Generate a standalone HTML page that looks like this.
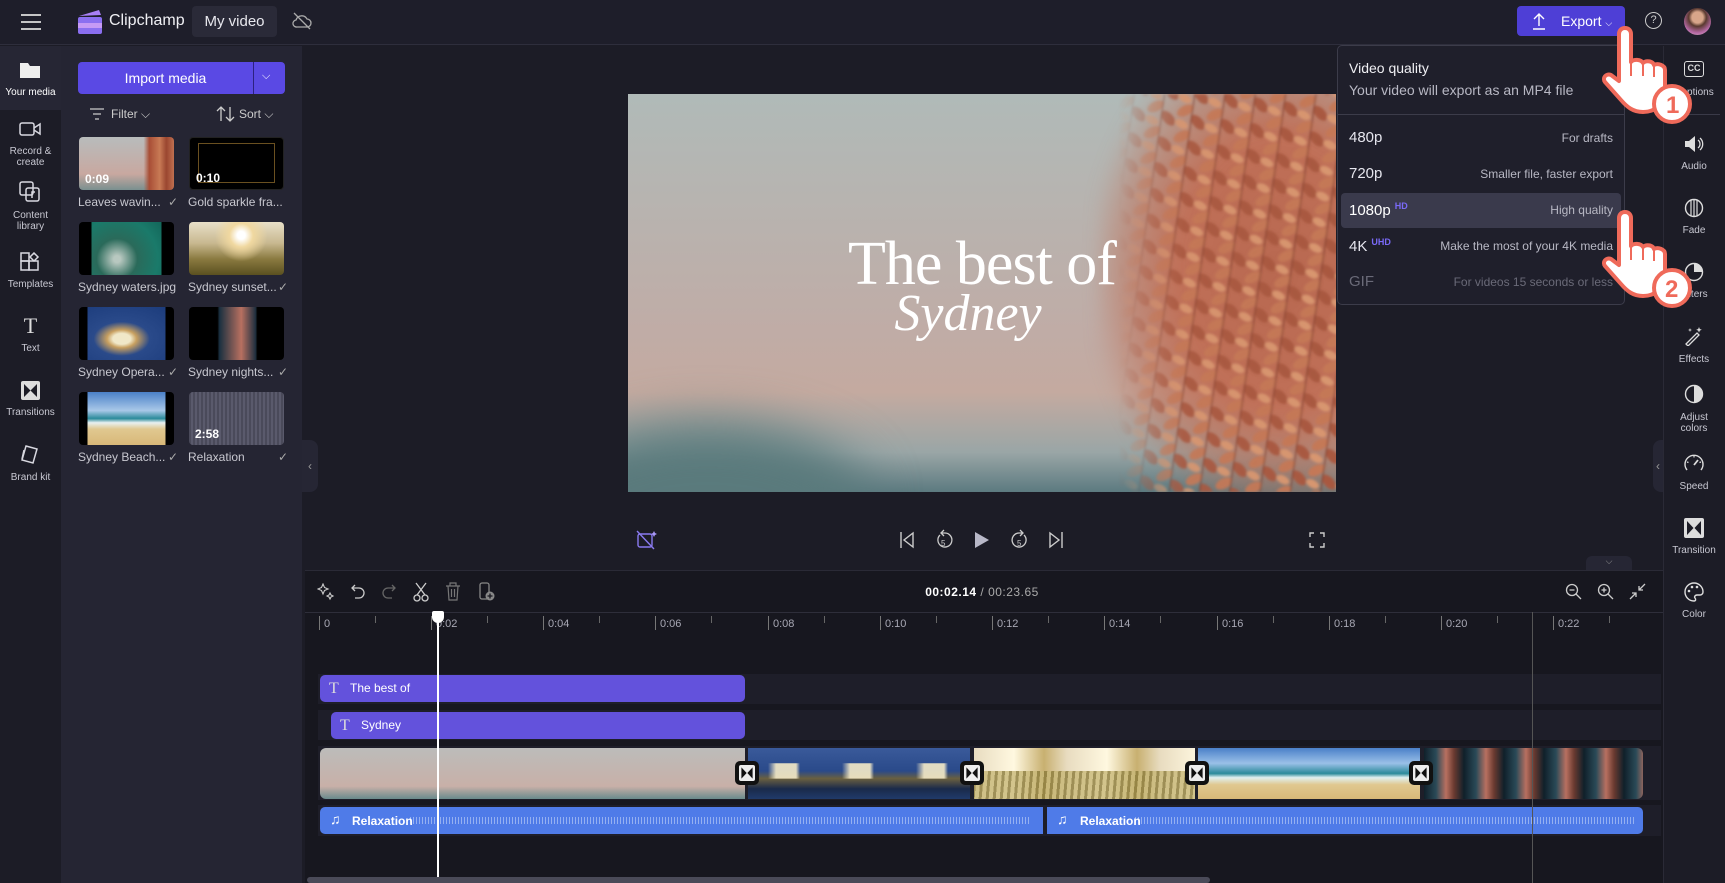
<!DOCTYPE html>
<html><head><meta charset="utf-8"><style>
*{margin:0;padding:0;box-sizing:border-box}
body{width:1725px;height:883px;overflow:hidden;background:#1c1c26;font-family:"Liberation Sans",sans-serif;color:#e8e8ee;position:relative}
.a{position:absolute}
.nav{font-size:10px;color:#c8c8d2;text-align:center;width:61px;left:0;line-height:11px}
.ic{stroke:#d8d8e0;fill:none;stroke-width:1.5}
.th{position:absolute;width:95px;height:53px;border-radius:4px;overflow:hidden}
.tl{position:absolute;font-size:12px;color:#c8c8d0;width:100px}
.tl span{position:absolute;right:0;color:#aaa}
.dur{position:absolute;left:6px;bottom:4px;font-size:12px;font-weight:bold;color:#fff}
.rl{position:absolute;font-size:11px;color:#a8a8b4;top:618px}
.tk{position:absolute;width:1px;background:#777;top:616px;height:14px}
.tks{position:absolute;width:1px;background:#666;top:616px;height:7px}
.rs{font-size:10px;color:#c8c8d2;text-align:center;width:62px;left:1663px;line-height:11px}
.q{position:absolute;left:1349px;font-size:15px;color:#e6e6ee}
.qd{position:absolute;right:112px;font-size:12px;color:#b8b8c4}
.tr{position:absolute;width:24px;height:24px;background:#111;border-radius:5px;top:761px}
.tr:before{content:"";position:absolute;left:4px;top:4px;width:16px;height:16px;background:#eee;border-radius:2px}
.tr:after{content:"";position:absolute;left:4px;top:4px;width:16px;height:16px;background:#111;clip-path:polygon(15% 15%,48% 50%,15% 85%,15% 15%,85% 15%,52% 50%,85% 85%,85% 15%)}
.tT{position:absolute;font-family:'Liberation Serif',serif;font-size:16px;color:#ddd;line-height:27px}
</style></head><body>

<!-- top bar -->
<div class="a" style="left:0;top:0;width:1725px;height:45px;background:#1e1e2a;border-bottom:1px solid #2e2e3c"></div>
<svg class="a" style="left:20px;top:13px" width="22" height="18"><path d="M1 2h20M1 9h20M1 16h20" stroke="#ddd" stroke-width="1.8"/></svg>
<svg class="a" style="left:77px;top:9px" width="26" height="26"><rect x="1" y="8" width="24" height="17" rx="2" fill="#8b6ff0"/><rect x="1" y="14" width="24" height="5" fill="#c69af5"/><path d="M2 7L22 1l2 5z" fill="#a880f5"/></svg>
<div class="a" style="left:109px;top:12px;font-size:16px;color:#f0f0f4">Clipchamp</div>
<div class="a" style="left:192px;top:6px;width:85px;height:31px;background:#2a2a38;border-radius:4px;font-size:15px;line-height:31px;text-align:center;color:#e8e8ee">My video</div>
<svg class="a" style="left:292px;top:12px" width="20" height="18"><path d="M5 15h10a4 4 0 0 0 0-8 6 6 0 0 0-11 1 3.5 3.5 0 0 0 1 7zM2 1l16 16" stroke="#aaa" fill="none" stroke-width="1.3"/></svg>
<div class="a" style="left:1517px;top:6px;width:108px;height:30px;background:#4e3fd6;border-radius:4px;font-size:14px;line-height:30px;color:#fff;padding-left:44px">Export <span style="font-size:9px">⌵</span></div>
<svg class="a" style="left:1531px;top:12px" width="16" height="18"><path d="M8 14V2M3 7l5-5 5 5M2 17h12" stroke="#fff" fill="none" stroke-width="1.4"/></svg>
<div class="a" style="left:1645px;top:12px;width:17px;height:17px;border:1.4px solid #ccc;border-radius:50%;font-size:11px;text-align:center;line-height:15px;color:#ccc">?</div>
<div class="a" style="left:1684px;top:8px;width:27px;height:27px;border-radius:50%;background:radial-gradient(circle at 50% 35%,#d8a58a 25%,#5a3a30 40%,#b86aa8 70%,#cfc0b8)"></div>

<!-- left nav -->
<div class="a" style="left:0;top:46px;width:61px;height:837px;background:#1c1c26"></div>
<div class="a" style="left:0;top:46px;width:61px;height:64px;background:#262634"></div>
<svg class="a" style="left:19px;top:60px" width="22" height="19"><path d="M1 3h8l2 3h10v12H1z" fill="#eee"/></svg>
<div class="a nav" style="top:87px;color:#fff">Your media</div>
<svg class="a" style="left:19px;top:121px" width="22" height="16"><rect x="1" y="2" width="14" height="12" rx="2" class="ic"/><path d="M15 7l6-4v10l-6-4" class="ic"/></svg>
<div class="a nav" style="top:146px">Record &amp;<br>create</div>
<svg class="a" style="left:19px;top:181px" width="22" height="22"><rect x="1" y="1" width="13" height="13" rx="2" class="ic"/><rect x="7" y="7" width="13" height="13" rx="2" fill="#1c1c26" class="ic"/><path d="M13 17v-6h3" class="ic"/></svg>
<div class="a nav" style="top:210px">Content<br>library</div>
<svg class="a" style="left:20px;top:252px" width="20" height="20"><rect x="1" y="9" width="8" height="9" class="ic"/><rect x="9" y="9" width="9" height="9" class="ic"/><rect x="1" y="1" width="8" height="8" class="ic"/><path d="M14 1l4 4-4 4-4-4z" class="ic"/></svg>
<div class="a nav" style="top:279px">Templates</div>
<div class="a" style="left:18px;top:313px;font-size:22px;color:#ddd;font-family:'Liberation Serif',serif;width:25px;text-align:center">T</div>
<div class="a nav" style="top:343px">Text</div>
<svg class="a" style="left:21px;top:381px" width="19" height="19"><rect x="0" y="0" width="19" height="19" rx="2" fill="#ddd"/><path d="M3 3l6.5 6.5L3 16zM16 3l-6.5 6.5L16 16z" fill="#1c1c26"/></svg>
<div class="a nav" style="top:407px">Transitions</div>
<svg class="a" style="left:20px;top:444px" width="20" height="20"><path d="M6 2l11 3-4 14-11-3z" class="ic"/><path d="M4 6l-2 9" class="ic"/></svg>
<div class="a nav" style="top:472px">Brand kit</div>

<!-- media panel -->
<div class="a" style="left:61px;top:46px;width:241px;height:837px;background:#252533"></div>
<div class="a" style="left:78px;top:62px;width:207px;height:32px;background:#5a49e4;border-radius:4px"></div>
<div class="a" style="left:78px;top:62px;width:175px;height:32px;font-size:14px;line-height:32px;text-align:center;color:#fff">Import media</div>
<div class="a" style="left:253px;top:62px;width:1px;height:32px;background:#2c2180"></div>
<div class="a" style="left:262px;top:70px;font-size:11px;color:#fff">⌵</div>
<svg class="a" style="left:89px;top:107px" width="16" height="13"><path d="M1 2h14M4 7h8M6 12h4" stroke="#ccc" stroke-width="1.3"/></svg>
<div class="a" style="left:111px;top:107px;font-size:12px;color:#ccc">Filter ⌵</div>
<svg class="a" style="left:216px;top:105px" width="20" height="18"><path d="M5 16V2M1 6l4-4 4 4M14 2v14M10 12l4 4 4-4" stroke="#ccc" fill="none" stroke-width="1.3"/></svg>
<div class="a" style="left:239px;top:107px;font-size:12px;color:#ccc">Sort ⌵</div>

<div class="th" style="left:79px;top:137px;background:linear-gradient(90deg,transparent 68%,#a84e36 74%,#c87a55 85%,#9a4630 92%,#c07050),linear-gradient(#b8bcbc,#c8a8a0 70%,#7a9090)"><div class="dur">0:09</div></div>
<div class="tl" style="left:78px;top:195px">Leaves wavin... <span>✓</span></div>
<div class="th" style="left:189px;top:137px;background:#000;border:1px solid #222"><div style="position:absolute;left:8px;top:5px;right:8px;bottom:6px;border:1px solid #6a5020"></div><div class="dur">0:10</div></div>
<div class="tl" style="left:188px;top:195px">Gold sparkle fra...</div>

<div class="th" style="left:79px;top:222px;background:linear-gradient(90deg,#000 13%,transparent 13%,transparent 87%,#000 87%),radial-gradient(circle at 40% 70%,#b8c8c0 5%,#2a6a5a 30%,#1a7a6a 60%,#0e5a50)"></div>
<div class="tl" style="left:78px;top:280px">Sydney waters.jpg</div>
<div class="th" style="left:189px;top:222px;background:radial-gradient(circle at 55% 25%,#fff 6%,#f0d8a0 18%,transparent 40%),linear-gradient(#e8e0c8,#c8b890 40%,#8a7a40 70%,#5a5020)"></div>
<div class="tl" style="left:188px;top:280px">Sydney sunset... <span>✓</span></div>

<div class="th" style="left:79px;top:307px;background:linear-gradient(90deg,#000 9%,transparent 9%,transparent 91%,#000 91%),radial-gradient(ellipse at 45% 60%,#f0e8c8 12%,#c8a060 20%,#2a4a8a 38%,#1a3a7a)"></div>
<div class="tl" style="left:78px;top:365px">Sydney Opera... <span>✓</span></div>
<div class="th" style="left:189px;top:307px;background:linear-gradient(90deg,#000 30%,#1a3040 32%,#b87060 55%,#203040 70%,#000 72%)"></div>
<div class="tl" style="left:188px;top:365px">Sydney nights... <span>✓</span></div>

<div class="th" style="left:79px;top:392px;background:linear-gradient(90deg,#000 9%,transparent 9%,transparent 91%,#000 91%),linear-gradient(#4a80c8,#a8c8e8 35%,#2a8a9a 50%,#e8f0f0 58%,#e0c890 70%,#d8b878)"></div>
<div class="tl" style="left:78px;top:450px">Sydney Beach... <span>✓</span></div>
<div class="th" style="left:189px;top:392px;background:repeating-linear-gradient(90deg,#4a4a5a 0 2px,#5a5a6c 2px 4px)"><div class="dur">2:58</div></div>
<div class="tl" style="left:188px;top:450px">Relaxation <span>✓</span></div>

<div class="a" style="left:302px;top:440px;width:16px;height:52px;background:#262634;border-radius:0 8px 8px 0;font-size:12px;color:#999;line-height:52px;text-align:center">‹</div>

<!-- preview -->
<div class="a" style="left:628px;top:94px;width:708px;height:398px;overflow:hidden;background:linear-gradient(#b0bab8,#c0aca6 60%,#c4aaa0 75%,#9aa6a6 90%,#5c7a80)">
  <div class="a" style="left:-80px;top:330px;width:320px;height:160px;border-radius:50%;background:#5a7a7c;filter:blur(25px)"></div>
  <div class="a" style="left:470px;top:-20px;width:280px;height:440px;background:radial-gradient(ellipse at 65% 45%,#b86850 0,#c07058 40%,rgba(190,110,85,.5) 60%,transparent 75%);filter:blur(8px)"></div>
  <svg class="a" style="left:490px;top:0" width="220" height="398">
    <defs>
      <pattern id="lv" width="30" height="26" patternUnits="userSpaceOnUse" patternTransform="rotate(8)">
        <ellipse cx="9" cy="7" rx="9" ry="5" transform="rotate(-35 9 7)" fill="#c47856"/>
        <ellipse cx="23" cy="17" rx="9" ry="5" transform="rotate(40 23 17)" fill="#a85840"/>
        <ellipse cx="7" cy="21" rx="7" ry="4" transform="rotate(20 7 21)" fill="#d89670"/>
        <path d="M16 0v26" stroke="#7a3a2a" stroke-width="1"/>
      </pattern>
      <linearGradient id="fm" x1="0" x2="1"><stop offset="0" stop-color="#fff" stop-opacity="0"/><stop offset=".3" stop-color="#fff" stop-opacity=".9"/><stop offset="1" stop-color="#fff"/></linearGradient>
      <mask id="mk"><rect width="220" height="398" fill="url(#fm)"/></mask>
      <filter id="bl"><feGaussianBlur stdDeviation="1.2"/></filter>
    </defs>
    <rect width="220" height="398" fill="url(#lv)" mask="url(#mk)" filter="url(#bl)"/>
  </svg>
  <div class="a" style="left:0;top:135px;width:708px;text-align:center;font-family:'Liberation Serif',serif;font-size:62px;color:#fff;letter-spacing:-1px">The best of</div>
  <div class="a" style="left:-14px;top:190px;width:708px;text-align:center;font-family:'Liberation Serif',serif;font-style:italic;font-size:52px;color:#fff">Sydney</div>
</div>

<!-- player controls -->
<svg class="a" style="left:636px;top:530px" width="22" height="20"><rect x="2" y="4" width="14" height="13" rx="2" stroke="#8a7af0" fill="none" stroke-width="1.4"/><path d="M1 1l17 18" stroke="#8a7af0" stroke-width="1.4"/><path d="M18 1l1 2 2 1-2 1-1 2-1-2-2-1 2-1z" fill="#a898f8"/></svg>
<svg class="a" style="left:899px;top:531px" width="16" height="18"><path d="M2 1v16M14 2L5 9l9 7z" stroke="#ccc" fill="none" stroke-width="1.4"/></svg>
<svg class="a" style="left:934px;top:529px" width="20" height="22"><path d="M6 6a7 7 0 1 0 5-2H8M10 1L7 4l3 3" stroke="#ccc" fill="none" stroke-width="1.3"/><text x="7" y="17" font-size="8" fill="#ccc" font-family="Liberation Sans">5</text></svg>
<svg class="a" style="left:972px;top:529px" width="20" height="22"><path d="M3 3l14 8-14 8z" fill="#b8b8c8"/></svg>
<svg class="a" style="left:1010px;top:529px" width="20" height="22"><path d="M14 6a7 7 0 1 1-5-2h3M10 1l3 3-3 3" stroke="#ccc" fill="none" stroke-width="1.3"/><text x="7" y="17" font-size="8" fill="#ccc" font-family="Liberation Sans">5</text></svg>
<svg class="a" style="left:1048px;top:531px" width="16" height="18"><path d="M14 1v16M2 2l9 7-9 7z" stroke="#ccc" fill="none" stroke-width="1.4"/></svg>
<svg class="a" style="left:1309px;top:532px" width="16" height="16"><path d="M1 5V1h4M11 1h4v4M15 11v4h-4M5 15H1v-4" stroke="#ccc" fill="none" stroke-width="1.4"/></svg>
<div class="a" style="left:1586px;top:556px;width:46px;height:14px;background:#262634;border-radius:6px 6px 0 0;font-size:9px;color:#999;text-align:center">⌵</div>

<!-- timeline -->
<div class="a" style="left:305px;top:570px;width:1358px;height:313px;background:#17171f;border-top:1px solid #2a2a36"></div>
<div class="a" style="left:305px;top:612px;width:1358px;height:1px;background:#2e2e3a"></div>
<svg class="a" style="left:317px;top:583px" width="18" height="18"><path d="M6 1l1.5 3.5L11 6 7.5 7.5 6 11 4.5 7.5 1 6l3.5-1.5zM13 10l1 2 2 1-2 1-1 2-1-2-2-1 2-1z" stroke="#ccc" fill="none" stroke-width="1.1"/></svg>
<svg class="a" style="left:350px;top:583px" width="16" height="18"><path d="M5 2L2 5l3 3M2 5h7a5 5 0 0 1 0 10H5" stroke="#ccc" fill="none" stroke-width="1.3"/></svg>
<svg class="a" style="left:381px;top:583px" width="16" height="18"><path d="M11 2l3 3-3 3M14 5H7a5 5 0 0 0 0 10h4" stroke="#666" fill="none" stroke-width="1.3"/></svg>
<svg class="a" style="left:413px;top:582px" width="16" height="20"><path d="M3 1l9 12M13 1L4 13" stroke="#ccc" stroke-width="1.3"/><circle cx="4" cy="16" r="3" stroke="#ccc" fill="none" stroke-width="1.3"/><circle cx="12" cy="16" r="3" stroke="#ccc" fill="none" stroke-width="1.3"/></svg>
<svg class="a" style="left:445px;top:582px" width="16" height="19"><path d="M1 4h14M5 4V1h6v3M3 4l1 14h8l1-14M6.5 7v8M9.5 7v8" stroke="#777" fill="none" stroke-width="1.2"/></svg>
<svg class="a" style="left:478px;top:582px" width="18" height="20"><rect x="2" y="1" width="9" height="16" rx="2" stroke="#888" fill="none" stroke-width="1.3"/><circle cx="12" cy="14" r="4.5" fill="#888"/><path d="M12 11.5v5M9.5 14h5" stroke="#17171f" stroke-width="1.3"/></svg>
<div class="a" style="left:882px;top:585px;width:200px;text-align:center;font-size:12px;color:#fff;font-weight:bold;letter-spacing:.5px">00:02.14 <span style="color:#aaa;font-weight:normal">/ 00:23.65</span></div>
<svg class="a" style="left:1565px;top:583px" width="18" height="18"><circle cx="7" cy="7" r="5.5" stroke="#ccc" fill="none" stroke-width="1.3"/><path d="M11 11l5 5M4.5 7h5" stroke="#ccc" stroke-width="1.3"/></svg>
<svg class="a" style="left:1597px;top:583px" width="18" height="18"><circle cx="7" cy="7" r="5.5" stroke="#ccc" fill="none" stroke-width="1.3"/><path d="M11 11l5 5M4.5 7h5M7 4.5v5" stroke="#ccc" stroke-width="1.3"/></svg>
<svg class="a" style="left:1629px;top:583px" width="18" height="18"><path d="M16 1l-6 6M10 3v4h4M1 16l6-6M3 10h4v4" stroke="#ccc" fill="none" stroke-width="1.3"/></svg>

<!-- ruler -->
<div class="tk" style="left:319px"></div><div class="rl" style="left:324px">0</div>
<div class="tks" style="left:375px"></div>
<div class="tk" style="left:431px"></div><div class="rl" style="left:436px">0:02</div>
<div class="tks" style="left:487px"></div>
<div class="tk" style="left:543px"></div><div class="rl" style="left:548px">0:04</div>
<div class="tks" style="left:599px"></div>
<div class="tk" style="left:655px"></div><div class="rl" style="left:660px">0:06</div>
<div class="tks" style="left:711px"></div>
<div class="tk" style="left:768px"></div><div class="rl" style="left:773px">0:08</div>
<div class="tks" style="left:824px"></div>
<div class="tk" style="left:880px"></div><div class="rl" style="left:885px">0:10</div>
<div class="tks" style="left:936px"></div>
<div class="tk" style="left:992px"></div><div class="rl" style="left:997px">0:12</div>
<div class="tks" style="left:1048px"></div>
<div class="tk" style="left:1104px"></div><div class="rl" style="left:1109px">0:14</div>
<div class="tks" style="left:1160px"></div>
<div class="tk" style="left:1217px"></div><div class="rl" style="left:1222px">0:16</div>
<div class="tks" style="left:1273px"></div>
<div class="tk" style="left:1329px"></div><div class="rl" style="left:1334px">0:18</div>
<div class="tks" style="left:1385px"></div>
<div class="tk" style="left:1441px"></div><div class="rl" style="left:1446px">0:20</div>
<div class="tks" style="left:1497px"></div>
<div class="tk" style="left:1553px"></div><div class="rl" style="left:1558px">0:22</div>
<div class="tks" style="left:1609px"></div>

<!-- track rows -->
<div class="a" style="left:318px;top:674px;width:1343px;height:30px;background:#1e1e29"></div>
<div class="a" style="left:318px;top:710px;width:1343px;height:30px;background:#1e1e29"></div>
<div class="a" style="left:318px;top:746px;width:1343px;height:54px;background:#1e1e29"></div>
<div class="a" style="left:318px;top:805px;width:1343px;height:31px;background:#1e1e29"></div>

<div class="a" style="left:320px;top:675px;width:425px;height:27px;background:#6352dc;border-radius:5px;font-size:12px;color:#fff;line-height:27px;padding-left:30px">The best of</div>
<div class="tT" style="left:329px;top:675px">T</div>
<div class="a" style="left:331px;top:712px;width:414px;height:27px;background:#6352dc;border-radius:5px;font-size:12px;color:#fff;line-height:27px;padding-left:30px">Sydney</div>
<div class="tT" style="left:340px;top:712px">T</div>

<div class="a" style="left:320px;top:748px;width:425px;height:51px;border-radius:6px 0 0 6px;background:linear-gradient(#bcbcba,#c8b0a8 75%,#6a8a8c)"></div>
<div class="a" style="left:748px;top:748px;width:222px;height:51px;background:linear-gradient(#3a5a9a,#2a4a8a 45%,#6a6040 60%,#1a2a4a 80%,#203a6a)"><div style="position:absolute;inset:0;background:repeating-linear-gradient(90deg,transparent 0 20px,rgba(245,235,200,.9) 28px 48px,transparent 52px 74px);clip-path:inset(30% 0 40% 0)"></div></div>
<div class="a" style="left:974px;top:748px;width:221px;height:51px;background:repeating-linear-gradient(90deg,#e8dcc0 0,#fff8e0 40px,#c8b070 70px,#e8dcc0 93px);"><div style="position:absolute;left:0;right:0;bottom:0;height:28px;background:repeating-linear-gradient(95deg,#8a7a3a 0 3px,#c8b878 3px 7px);opacity:.8"></div></div>
<div class="a" style="left:1198px;top:748px;width:222px;height:51px;background:linear-gradient(#4a80c8,#9ac0e8 30%,#2a8a9a 50%,#e0f0f0 58%,#e0c890 72%,#d8b878)"></div>
<div class="a" style="left:1424px;top:748px;width:219px;height:51px;border-radius:0 6px 6px 0;background:repeating-linear-gradient(90deg,#10202a 0,#2a4a58 12px,#b87060 22px,#6a3a30 30px,#10202a 40px)"></div>
<div class="tr" style="left:735px"></div>
<div class="tr" style="left:960px"></div>
<div class="tr" style="left:1185px"></div>
<div class="tr" style="left:1409px"></div>

<div class="a" style="left:320px;top:807px;width:723px;height:27px;background:#4f7be8;border-radius:5px 0 0 5px"></div>
<div class="a" style="left:1047px;top:807px;width:596px;height:27px;background:#4f7be8;border-radius:0 5px 5px 0"></div>
<div class="a" style="left:410px;top:817px;width:620px;height:7px;background:repeating-linear-gradient(90deg,rgba(255,255,255,.4) 0 1px,transparent 1px 3px)"></div>
<div class="a" style="left:1135px;top:817px;width:500px;height:7px;background:repeating-linear-gradient(90deg,rgba(255,255,255,.4) 0 1px,transparent 1px 3px)"></div>
<div class="a" style="left:330px;top:811px;font-size:14px;color:#fff">♫</div>
<div class="a" style="left:352px;top:814px;font-size:12px;color:#fff;font-weight:bold">Relaxation</div>
<div class="a" style="left:1057px;top:811px;font-size:14px;color:#fff">♫</div>
<div class="a" style="left:1080px;top:814px;font-size:12px;color:#fff;font-weight:bold">Relaxation</div>

<div class="a" style="left:1532px;top:612px;width:1px;height:271px;background:#555"></div>
<div class="a" style="left:437px;top:612px;width:2px;height:271px;background:#fff"></div>
<div class="a" style="left:432px;top:611px;width:12px;height:12px;background:#fff;border-radius:2px 2px 6px 6px"></div>
<div class="a" style="left:307px;top:877px;width:903px;height:6px;background:#4a4a58;border-radius:3px"></div>

<!-- right sidebar -->
<div class="a" style="left:1663px;top:46px;width:62px;height:837px;background:#1c1c26;border-left:1px solid #2a2a36"></div>
<div class="a" style="left:1653px;top:440px;width:10px;height:52px;background:#262634;border-radius:8px 0 0 8px;font-size:12px;color:#999;line-height:52px;text-align:center">‹</div>
<div class="a" style="left:1684px;top:61px;width:20px;height:16px;border:1.5px solid #ddd;border-radius:3px;font-size:9px;font-weight:bold;text-align:center;line-height:13px;color:#ddd">CC</div>
<div class="a rs" style="top:87px">Captions</div>
<div class="a" style="left:1670px;top:114px;width:50px;height:1px;background:#3a3a48"></div>
<svg class="a" style="left:1683px;top:134px" width="22" height="20"><path d="M2 7h4l6-5v16l-6-5H2z" fill="#ddd"/><path d="M15 6a5 5 0 0 1 0 8M17 4a8 8 0 0 1 0 12" stroke="#ddd" fill="none" stroke-width="1.3"/></svg>
<div class="a rs" style="top:161px">Audio</div>
<svg class="a" style="left:1684px;top:198px" width="20" height="20"><circle cx="10" cy="10" r="8.5" stroke="#ddd" fill="none" stroke-width="1.4"/><path d="M7 2v16M10 1.5v17M13 2v16" stroke="#ddd" stroke-width="1.2"/></svg>
<div class="a rs" style="top:225px">Fade</div>
<svg class="a" style="left:1684px;top:262px" width="20" height="20"><circle cx="10" cy="10" r="8.5" stroke="#ddd" fill="none" stroke-width="1.4"/><path d="M10 1.5a8.5 8.5 0 0 1 8.5 8.5H10z" fill="#ddd"/></svg>
<div class="a rs" style="top:289px">Filters</div>
<svg class="a" style="left:1684px;top:326px" width="20" height="20"><path d="M2 18L13 7l2 2L4 20z" stroke="#ddd" fill="none" stroke-width="1.3"/><path d="M15 1l.8 2 2 .8-2 .8-.8 2-.8-2-2-.8 2-.8zM6 2l.5 1.5L8 4l-1.5.5L6 6l-.5-1.5L4 4l1.5-.5z" fill="#ddd"/></svg>
<div class="a rs" style="top:354px">Effects</div>
<svg class="a" style="left:1684px;top:384px" width="20" height="20"><circle cx="10" cy="10" r="8.5" stroke="#ddd" fill="none" stroke-width="1.4"/><path d="M10 1.5a8.5 8.5 0 0 1 0 17z" fill="#ddd"/></svg>
<div class="a rs" style="top:412px">Adjust<br>colors</div>
<svg class="a" style="left:1683px;top:453px" width="22" height="20"><path d="M4 17a9 9 0 1 1 14 0" stroke="#ddd" fill="none" stroke-width="1.4"/><path d="M11 12l4-5" stroke="#ddd" stroke-width="1.8"/><path d="M4 9l1.5 .5M11 3v1.5M18 9l-1.5 .5" stroke="#ddd" stroke-width="1.2"/></svg>
<div class="a rs" style="top:481px">Speed</div>
<svg class="a" style="left:1684px;top:518px" width="20" height="20"><rect width="20" height="20" rx="2" fill="#ddd"/><path d="M3 3l6.5 7L3 17zM17 3l-6.5 7 6.5 7z" fill="#1c1c26"/></svg>
<div class="a rs" style="top:545px">Transition</div>
<svg class="a" style="left:1683px;top:581px" width="22" height="22"><path d="M11 2a9 9 0 0 0 0 18c2 0 2-2 1-3s0-3 2-3h3a3 3 0 0 0 3-3c0-5-4-9-9-9z" stroke="#ddd" fill="none" stroke-width="1.4"/><circle cx="6" cy="10" r="1.3" fill="#ddd"/><circle cx="9" cy="6" r="1.3" fill="#ddd"/><circle cx="14" cy="6" r="1.3" fill="#ddd"/></svg>
<div class="a rs" style="top:609px">Color</div>

<!-- export dropdown -->
<div class="a" style="left:1337px;top:45px;width:288px;height:260px;background:#1f1f2b;border:1px solid #3c3c4a;border-radius:5px"></div>
<div class="a" style="left:1349px;top:60px;font-size:14px;color:#f0f0f4">Video quality</div>
<div class="a" style="left:1349px;top:82px;font-size:14px;color:#b8b8c4">Your video will export as an MP4 file</div>
<div class="a" style="left:1338px;top:114px;width:286px;height:1px;background:#3c3c4a"></div>
<div class="q" style="top:129px">480p</div><div class="qd" style="top:131px">For drafts</div>
<div class="q" style="top:165px">720p</div><div class="qd" style="top:167px">Smaller file, faster export</div>
<div class="a" style="left:1341px;top:193px;width:280px;height:35px;background:#3a3a4c;border-radius:4px"></div>
<div class="q" style="top:201px;color:#fff">1080p<sup style="font-size:9px;font-weight:bold;color:#7a6af8;margin-left:4px">HD</sup></div><div class="qd" style="top:203px">High quality</div>
<div class="q" style="top:237px">4K<sup style="font-size:9px;font-weight:bold;color:#7a6af8;margin-left:4px">UHD</sup></div><div class="qd" style="top:239px">Make the most of your 4K media</div>
<div class="q" style="top:273px;color:#6a6a78">GIF</div><div class="qd" style="top:275px;color:#6a6a78">For videos 15 seconds or less</div>

<!-- hand cursors -->
<svg class="a" style="left:1590px;top:20px" width="110" height="110"><path d="M35 8c4 0 6 3 6 6v28c2-3 10-3 12 1 3-3 10-2 11 2 4-2 11 0 11 5v20c0 14-10 22-22 22-10 0-16-5-22-12L15 62c-3-4 1-9 6-7l8 6V14c0-3 2-6 6-6z" fill="#fff" stroke="#ef6a5a" stroke-width="4" stroke-linejoin="round"/><path d="M41 42v14M53 43v13M64 46v11" stroke="#ef6a5a" stroke-width="2"/><circle cx="82" cy="84" r="18" fill="#fff" stroke="#ef6a5a" stroke-width="4"/><text x="76" y="93" font-size="24" font-weight="bold" fill="#ef6a5a" font-family="Liberation Sans">1</text></svg>
<svg class="a" style="left:1590px;top:204px" width="110" height="110"><path d="M35 8c4 0 6 3 6 6v28c2-3 10-3 12 1 3-3 10-2 11 2 4-2 11 0 11 5v20c0 14-10 22-22 22-10 0-16-5-22-12L15 62c-3-4 1-9 6-7l8 6V14c0-3 2-6 6-6z" fill="#fff" stroke="#ef6a5a" stroke-width="4" stroke-linejoin="round"/><path d="M41 42v14M53 43v13M64 46v11" stroke="#ef6a5a" stroke-width="2"/><circle cx="82" cy="84" r="18" fill="#fff" stroke="#ef6a5a" stroke-width="4"/><text x="75" y="93" font-size="24" font-weight="bold" fill="#ef6a5a" font-family="Liberation Sans">2</text></svg>
</body></html>
